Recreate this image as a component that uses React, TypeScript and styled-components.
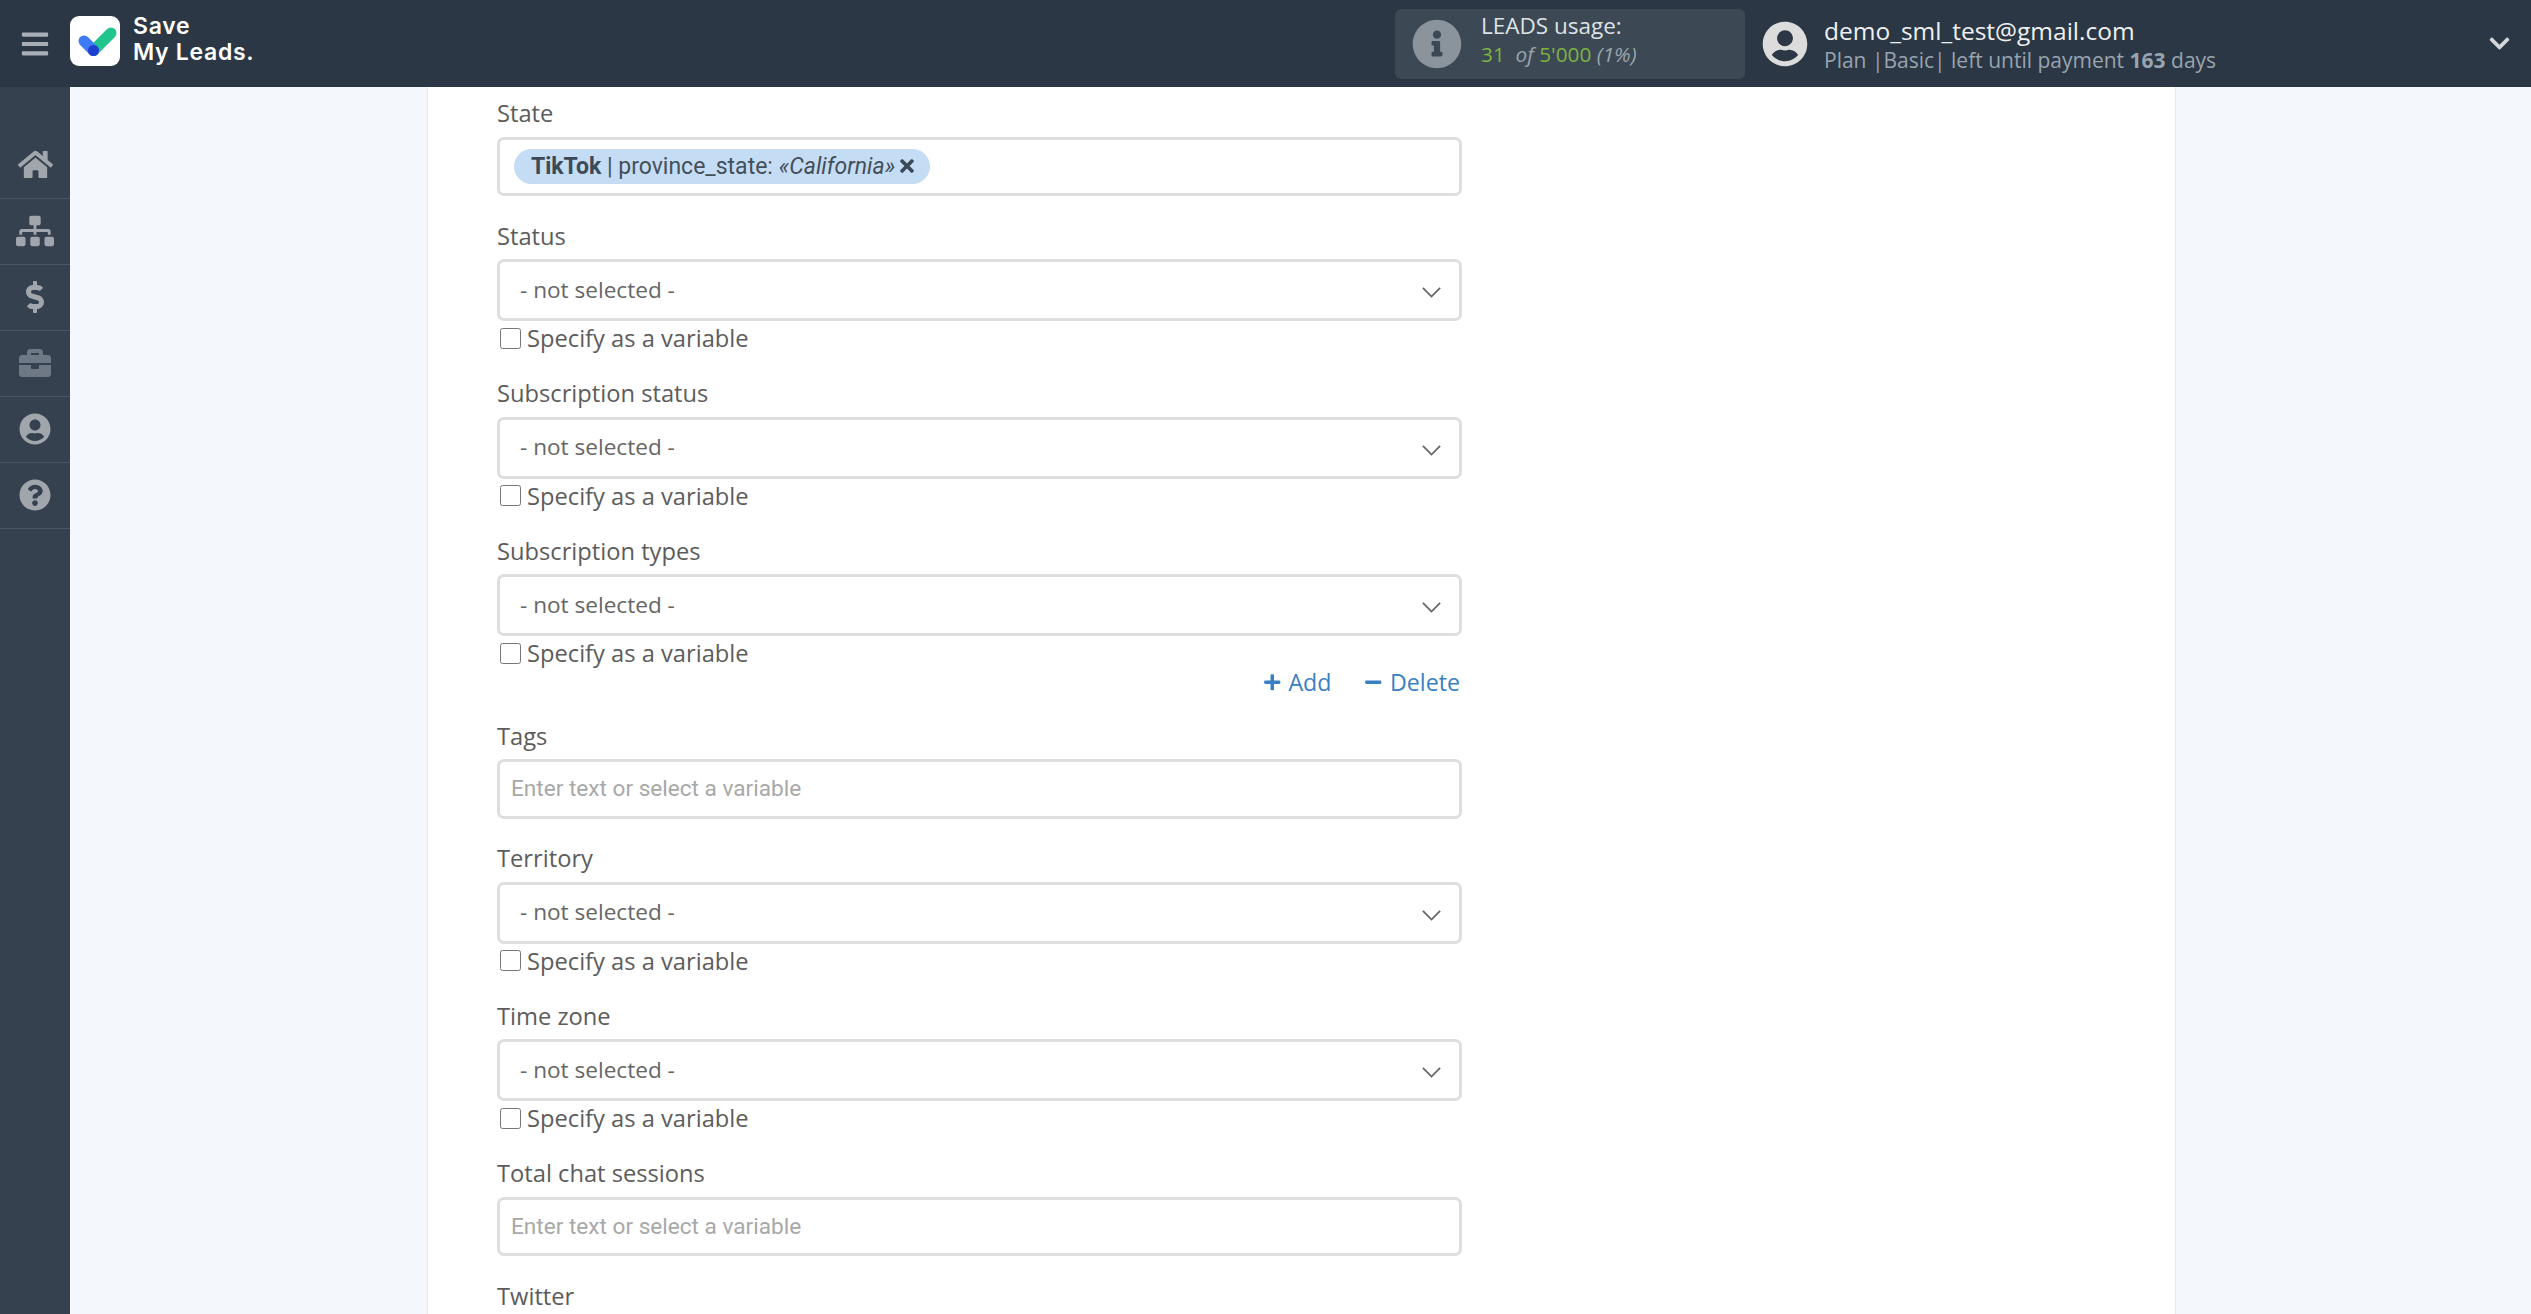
import React from "react";
import styled, { createGlobalStyle } from "styled-components";
import {
  FaBars,
  FaBriefcase,
  FaChevronDown,
  FaDollarSign,
  FaHome,
  FaInfoCircle,
  FaMinus,
  FaPlus,
  FaQuestionCircle,
  FaSitemap,
  FaTimes,
  FaUserCircle,
} from "react-icons/fa";

const GlobalStyle = createGlobalStyle`
  html, body { margin: 0; padding: 0; background: #f4f7fc; }
  body { font-family: "Open Sans", sans-serif; overflow: hidden; }
  * { box-sizing: border-box; }
`;

const Page = styled.div`
  height: 1314px;
  display: flex;
  flex-direction: column;
  overflow: hidden;
`;

const Header = styled.header`
  height: 87px;
  flex: none;
  background: #2b3744;
  display: flex;
  align-items: center;
  color: #fff;
`;

const MenuButton = styled.div`
  width: 70px;
  flex: none;
  display: flex;
  justify-content: center;
  color: #a9afb6;
  font-size: 30px;
  line-height: 0;
`;

const LogoBox = styled.svg`
  width: 50px;
  height: 50px;
  flex: none;
  margin-bottom: 6px;
`;

const LogoText = styled.div`
  margin: -9px 0 0 13px;
  width: 1262px;
  flex: none;
  font-family: Inter, sans-serif;
  font-weight: 600;
  font-size: 23px;
  line-height: 26px;
  letter-spacing: 0.7px;
`;

const UsageBox = styled.div`
  width: 350px;
  height: 70px;
  flex: none;
  background: #3c4853;
  border-radius: 6px;
  display: flex;
  align-items: center;
  padding-left: 17px;
  gap: 19px;
`;

const InfoIcon = styled(FaInfoCircle)`
  width: 50px;
  height: 50px;
  color: #8b949c;
`;

const UsageText = styled.div`
  padding-bottom: 7px;
`;

const UsageTitle = styled.div`
  font-size: 22.5px;
  line-height: 28px;
  color: #dfe2e4;
`;

const UsageCount = styled.div`
  font-size: 20.8px;
  line-height: 28px;
  color: #7cb342;
`;

const Muted = styled.i`
  color: #9aa5ae;
`;

const Account = styled.div`
  margin-left: 17px;
  flex: 1;
  display: flex;
  align-items: center;
  gap: 16px;
`;

const AvatarIcon = styled(FaUserCircle)`
  width: 46px;
  height: 46px;
  color: #dcdcdc;
  flex: none;
`;

const Email = styled.div`
  font-size: 24.5px;
  line-height: 31px;
  padding-top: 2px;
  color: #eef0f1;
`;

const PlanLine = styled.div`
  font-size: 21px;
  line-height: 28px;
  color: #98a4af;
`;

const AccountChevron = styled(FaChevronDown)`
  width: 23px;
  height: 23px;
  margin: 0 20px 0 auto;
  color: #d5d8db;
`;

const Body = styled.div`
  flex: 1;
  display: flex;
  min-height: 0;
`;

const Sidebar = styled.nav`
  width: 70px;
  flex: none;
  background: #35414f;
  padding-top: 46px;
`;

const NavItem = styled.div<{ $dim?: boolean; $size?: number }>`
  height: 66px;
  padding-bottom: 2px;
  display: flex;
  align-items: center;
  justify-content: center;
  border-bottom: 1px solid #4b5663;
  color: ${(p) => (p.$dim ? "#6f7985" : "#a0a6ac")};
  font-size: ${(p) => p.$size ?? 32}px;
  line-height: 0;
`;

const Main = styled.main`
  flex: 1;
  padding: 0 355px 0 357px;
  min-width: 0;
`;

const Card = styled.section`
  height: 100%;
  background: #fff;
  border-left: 1px solid #e6eaef;
  border-right: 1px solid #e6eaef;
  padding: 11px 0 0 69px;
`;

const Fields = styled.div`
  width: 965px;
`;

const Field = styled.div<{ $gap?: number }>`
  margin-bottom: ${(p) => p.$gap ?? 24.5}px;
`;

const Label = styled.div`
  font-size: 23.7px;
  line-height: 30px;
  color: #5c5c5c;
  margin-bottom: 8.5px;
`;

const ChipInput = styled.div`
  height: 59.5px;
  border: 3px solid #dedede;
  border-radius: 7px;
  background: #fff;
  display: flex;
  align-items: center;
  padding-left: 14px;
`;

const Chip = styled.div`
  height: 35px;
  border-radius: 18px;
  background: #c5dcf5;
  display: flex;
  align-items: center;
  padding: 0 13px 0 17px;
  font-family: Roboto, sans-serif;
  font-size: 23px;
  color: #444f5a;
  white-space: pre;
`;

const ChipSource = styled.b`
  color: #3c4a57;
`;

const ChipRemove = styled(FaTimes)`
  width: 20px;
  height: 20px;
  margin-left: 2px;
  color: #3c4a57;
`;

const TextInput = styled.input`
  display: block;
  width: 100%;
  height: 59.5px;
  border: 3px solid #dedede;
  border-radius: 7px;
  background: #fff;
  padding: 0 11px;
  outline: none;
  font-family: Roboto, sans-serif;
  font-size: 22.6px;
  color: #555;

  &::placeholder {
    color: #a8a8a8;
    opacity: 1;
  }
`;

const SelectBox = styled.div`
  height: 62px;
  border: 3px solid #dedede;
  border-radius: 7px;
  background: #fff;
  display: flex;
  align-items: center;
  justify-content: space-between;
  padding: 0 18px 2px 20px;
  font-size: 22.6px;
  color: #666;
`;

const SelectArrow = styled.svg`
  width: 19px;
  height: 11px;
  margin-top: 7px;
  fill: none;
  stroke: #666;
  stroke-width: 2;
`;

const VariableRow = styled.label`
  height: 36px;
  padding-bottom: 2px;
  display: flex;
  align-items: center;
  font-size: 23.7px;
  color: #5c5c5c;
`;

const VariableCheck = styled.input`
  width: 21px;
  height: 21px;
  margin: 0 6px 0 3px;
`;

const ActionRow = styled.div`
  height: 22px;
  margin-top: -1px;
  padding-right: 2px;
  display: flex;
  justify-content: flex-end;
  align-items: center;
  gap: 33px;
  font-size: 23.2px;
  color: #3a7fc1;
`;

const Action = styled.span`
  display: flex;
  align-items: center;
  gap: 7px;
`;

const ActionIcon = styled.span`
  display: flex;
  font-size: 18.5px;
`;

const SelectField = ({ label }: { label: string }) => (
  <>
    <Label>{label}</Label>
    <SelectBox>
      - not selected -
      <SelectArrow viewBox="0 0 21 12">
        <polyline points="1,1 10.5,10.5 20,1" />
      </SelectArrow>
    </SelectBox>
    <VariableRow>
      <VariableCheck type="checkbox" />
      Specify as a variable
    </VariableRow>
  </>
);

const InputField = ({ label }: { label: string }) => (
  <Field>
    <Label>{label}</Label>
    <TextInput placeholder="Enter text or select a variable" />
  </Field>
);

const App = () => {
  return (
    <Page>
      <GlobalStyle />
      <Header>
        <MenuButton>
          <FaBars />
        </MenuButton>
        <LogoBox viewBox="0 0 50 50">
          <rect width="50" height="50" rx="9" fill="#fff" />
          <line x1="23.5" y1="34.5" x2="41" y2="17" stroke="#22c48d" strokeWidth="11" strokeLinecap="round" />
          <line x1="14" y1="25" x2="23.5" y2="34.5" stroke="#3f7bf6" strokeWidth="11" strokeLinecap="round" />
          <circle cx="23.5" cy="34.5" r="5.5" fill="#1f3fd0" />
        </LogoBox>
        <LogoText>
          Save
          <br />
          My Leads.
        </LogoText>
        <UsageBox>
          <InfoIcon />
          <UsageText>
            <UsageTitle>LEADS usage:</UsageTitle>
            <UsageCount>
              31 <Muted>&nbsp;of</Muted> 5'000 <Muted>(1%)</Muted>
            </UsageCount>
          </UsageText>
        </UsageBox>
        <Account>
          <AvatarIcon />
          <div>
            <Email>demo_sml_test@gmail.com</Email>
            <PlanLine>
              Plan |Basic| left until payment <b>163</b> days
            </PlanLine>
          </div>
          <AccountChevron />
        </Account>
      </Header>
      <Body>
        <Sidebar>
          <NavItem $size={35}>
            <FaHome />
          </NavItem>
          <NavItem $size={38}>
            <FaSitemap />
          </NavItem>
          <NavItem>
            <FaDollarSign />
          </NavItem>
          <NavItem $dim>
            <FaBriefcase />
          </NavItem>
          <NavItem>
            <FaUserCircle />
          </NavItem>
          <NavItem>
            <FaQuestionCircle />
          </NavItem>
        </Sidebar>
        <Main>
          <Card>
            <Fields>
              <Field>
                <Label>State</Label>
                <ChipInput>
                  <Chip>
                    <ChipSource>TikTok</ChipSource> | province_state: <i>«California»</i>
                    <ChipRemove />
                  </Chip>
                </ChipInput>
              </Field>
              <Field $gap={21}>
                <SelectField label="Status" />
              </Field>
              <Field $gap={21}>
                <SelectField label="Subscription status" />
              </Field>
              <Field $gap={27.5}>
                <SelectField label="Subscription types" />
                <ActionRow>
                  <Action>
                    <ActionIcon>
                      <FaPlus />
                    </ActionIcon>
                    Add
                  </Action>
                  <Action>
                    <ActionIcon>
                      <FaMinus />
                    </ActionIcon>
                    Delete
                  </Action>
                </ActionRow>
              </Field>
              <InputField label="Tags" />
              <Field $gap={21}>
                <SelectField label="Territory" />
              </Field>
              <Field $gap={21}>
                <SelectField label="Time zone" />
              </Field>
              <InputField label="Total chat sessions" />
              <Label>Twitter</Label>
            </Fields>
          </Card>
        </Main>
      </Body>
    </Page>
  );
};

export default App;
